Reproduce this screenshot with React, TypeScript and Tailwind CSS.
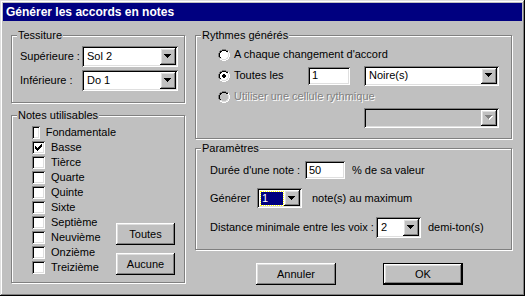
import type { ReactNode } from "react";

const raised =
  "shadow-[inset_-1px_-1px_#000,inset_1px_1px_#fff,inset_-2px_-2px_#808080,inset_2px_2px_#dfdfdf]";
const sunken =
  "shadow-[inset_1px_1px_#808080,inset_-1px_-1px_#fff,inset_2px_2px_#000,inset_-2px_-2px_#dfdfdf]";

function Arrow({ disabled = false }: { disabled?: boolean }) {
  const fill = disabled ? "#808080" : "#000";
  return (
    <svg width="8" height="5" viewBox="0 0 8 5" shapeRendering="crispEdges">
      {disabled && (
        <g fill="#fff">
          <rect x="1" y="1" width="7" height="1" />
          <rect x="2" y="2" width="5" height="1" />
          <rect x="3" y="3" width="3" height="1" />
          <rect x="4" y="4" width="1" height="1" />
        </g>
      )}
      <g fill={fill}>
        <rect x="0" y="0" width="7" height="1" />
        <rect x="1" y="1" width="5" height="1" />
        <rect x="2" y="2" width="3" height="1" />
        <rect x="3" y="3" width="1" height="1" />
      </g>
    </svg>
  );
}

function Combo({
  value,
  className,
  disabled = false,
  selected = false,
}: {
  value?: string;
  className: string;
  disabled?: boolean;
  selected?: boolean;
}) {
  return (
    <div
      className={`flex p-[2px] ${sunken} ${disabled ? "bg-[#c0c0c0]" : "bg-white"} ${className}`}
    >
      <div className="flex-1 flex items-center pl-[2px] pr-[1px] overflow-hidden">
        {selected ? (
          <div className="flex items-center h-[13px] w-full bg-[#000080] text-white pl-[1px] outline outline-1 outline-dotted outline-[#ffff00]">
            {value}
          </div>
        ) : (
          <span className="pl-[1px]">{value}</span>
        )}
      </div>
      <div className={`w-[16px] flex items-center justify-center bg-[#c0c0c0] ${raised}`}>
        <Arrow disabled={disabled} />
      </div>
    </div>
  );
}

function Group({
  label,
  className,
  children,
}: {
  label: string;
  className: string;
  children: ReactNode;
}) {
  return (
    <div
      className={`relative border border-[#808080] shadow-[1px_1px_0_#fff,inset_1px_1px_0_#fff] ${className}`}
    >
      <span className="absolute -top-[8px] left-[5px] px-[1px] bg-[#c0c0c0] leading-[14px]">
        {label}
      </span>
      {children}
    </div>
  );
}

function Check({ label, checked = false }: { label: string; checked?: boolean }) {
  return (
    <div className="flex items-center h-[15px] gap-[6px]">
      <div className={`w-[13px] h-[13px] bg-white flex items-center justify-center ${sunken}`}>
        {checked && (
          <svg width="7" height="7" viewBox="0 0 7 7" shapeRendering="crispEdges" fill="#000">
            <rect x="0" y="2" width="1" height="3" />
            <rect x="1" y="3" width="1" height="3" />
            <rect x="2" y="4" width="1" height="3" />
            <rect x="3" y="3" width="1" height="3" />
            <rect x="4" y="2" width="1" height="3" />
            <rect x="5" y="1" width="1" height="3" />
            <rect x="6" y="0" width="1" height="3" />
          </svg>
        )}
      </div>
      <span>{label}</span>
    </div>
  );
}

function Radio({ checked = false, disabled = false }: { checked?: boolean; disabled?: boolean }) {
  return (
    <svg width="12" height="12" viewBox="0 0 12 12" shapeRendering="crispEdges">
      <g fill="#808080">
        <rect x="4" y="0" width="4" height="1" />
        <rect x="2" y="1" width="2" height="1" />
        <rect x="8" y="1" width="2" height="1" />
        <rect x="1" y="2" width="1" height="2" />
        <rect x="0" y="4" width="1" height="4" />
        <rect x="1" y="8" width="1" height="1" />
      </g>
      <g fill="#fff">
        <rect x="10" y="2" width="1" height="2" />
        <rect x="11" y="4" width="1" height="4" />
        <rect x="10" y="8" width="1" height="2" />
        <rect x="8" y="10" width="2" height="1" />
        <rect x="4" y="11" width="4" height="1" />
        <rect x="2" y="10" width="2" height="1" />
      </g>
      <g fill="#000">
        <rect x="4" y="1" width="4" height="1" />
        <rect x="2" y="2" width="2" height="1" />
        <rect x="8" y="2" width="2" height="1" />
        <rect x="1" y="4" width="1" height="4" />
        <rect x="2" y="3" width="1" height="1" />
        <rect x="2" y="8" width="1" height="1" />
      </g>
      <g fill="#dfdfdf">
        <rect x="9" y="3" width="1" height="1" />
        <rect x="10" y="4" width="1" height="4" />
        <rect x="9" y="8" width="1" height="2" />
        <rect x="4" y="10" width="4" height="1" />
        <rect x="2" y="9" width="2" height="1" />
        <rect x="8" y="9" width="1" height="1" />
      </g>
      <g fill={disabled ? "#c0c0c0" : "#fff"}>
        <rect x="4" y="2" width="4" height="8" />
        <rect x="3" y="3" width="6" height="6" />
        <rect x="2" y="4" width="8" height="4" />
      </g>
      {checked && (
        <g fill="#000">
          <rect x="5" y="4" width="2" height="4" />
          <rect x="4" y="5" width="4" height="2" />
        </g>
      )}
    </svg>
  );
}

function Button({ label, isDefault = false }: { label: string; isDefault?: boolean }) {
  if (isDefault) {
    return (
      <div className="w-[80px] h-[22px] border border-black flex">
        <div className={`flex-1 flex items-center justify-center bg-[#c0c0c0] ${raised}`}>
          {label}
        </div>
      </div>
    );
  }
  return (
    <div className={`w-[80px] h-[22px] flex items-center justify-center bg-[#c0c0c0] ${raised}`}>
      {label}
    </div>
  );
}

const notes = [
  "Fondamentale",
  "Basse",
  "Tièrce",
  "Quarte",
  "Quinte",
  "Sixte",
  "Septième",
  "Neuvième",
  "Onzième",
  "Treizième",
];

export default function App() {
  return (
    <div
      className="w-[525px] h-[296px] bg-[#c0c0c0] p-[3px] text-[11px] leading-[13px] text-black shadow-[inset_-1px_-1px_#000,inset_1px_1px_#dfdfdf,inset_-2px_-2px_#808080,inset_2px_2px_#fff]"
      style={{ fontFamily: "'Liberation Sans', Arial, sans-serif" }}
    >
      {/* Title bar */}
      <div className="h-[18px] bg-[#000080] flex items-center pl-[3px]">
        <span className="text-white font-bold text-[12px]">Générer les accords en notes</span>
      </div>

      <div className="flex gap-[10px] pl-[8px] pt-[14px]">
        {/* Left column */}
        <div className="w-[174px] flex flex-col">
          <Group label="Tessiture" className="h-[68px]">
            <div className="flex flex-col gap-[3px] pt-[10px] pl-[8px]">
              <div className="flex items-center">
                <span className="w-[62px]">Supérieure :</span>
                <Combo value="Sol 2" className="w-[96px] h-[21px]" />
              </div>
              <div className="flex items-center">
                <span className="w-[62px]">Inférieure :</span>
                <Combo value="Do 1" className="w-[96px] h-[21px]" />
              </div>
            </div>
          </Group>

          <Group label="Notes utilisables" className="mt-[12px] h-[168px]">
            <div className="flex pt-[9px] pl-[20px]">
              <div className="w-[84px] flex flex-col">
                {notes.map((n) => (
                  <Check key={n} label={n} checked={n === "Basse"} />
                ))}
              </div>
              <div className="flex flex-col justify-end gap-[8px]">
                <div className={`w-[59px] h-[22px] flex items-center justify-center ${raised}`}>
                  Toutes
                </div>
                <div className={`w-[59px] h-[22px] flex items-center justify-center ${raised}`}>
                  Aucune
                </div>
              </div>
            </div>
          </Group>
        </div>

        {/* Right column */}
        <div className="w-[317px] flex flex-col">
          <Group label="Rythmes générés" className="h-[104px]">
            <div className="flex flex-col pt-[8px] pl-[22px]">
              <div className="flex items-center h-[21px] gap-[4px]">
                <Radio />
                <span>A chaque changement d'accord</span>
              </div>
              <div className="flex items-center h-[21px]">
                <Radio checked />
                <span className="ml-[4px] w-[74px]">Toutes les</span>
                <div className={`w-[42px] h-[18px] bg-white flex items-center pl-[4px] ${sunken}`}>
                  1
                </div>
                <Combo value="Noire(s)" className="ml-[14px] w-[135px] h-[20px]" />
              </div>
              <div className="flex items-center h-[21px] gap-[4px]">
                <Radio disabled />
                <span className="text-[#808080] [text-shadow:1px_1px_0_#fff]">
                  Utiliser une cellule rythmique
                </span>
              </div>
              <div className="flex items-center h-[21px]">
                <Combo disabled className="ml-[146px] w-[135px] h-[20px]" />
              </div>
            </div>
          </Group>

          <Group label="Paramètres" className="mt-[9px] h-[102px]">
            <div className="flex flex-col pt-[12px] pl-[14px] gap-[9px]">
              <div className="flex items-center h-[18px]">
                <span className="w-[95px]">Durée d'une note :</span>
                <div className={`w-[40px] h-[18px] bg-white flex items-center pl-[4px] ${sunken}`}>
                  50
                </div>
                <span className="ml-[7px]">% de sa valeur</span>
              </div>
              <div className="flex items-center h-[20px]">
                <span className="w-[47px]">Générer</span>
                <Combo value="1" selected className="w-[45px] h-[20px]" />
                <span className="ml-[10px]">note(s) au maximum</span>
              </div>
              <div className="flex items-center h-[21px]">
                <span className="w-[166px]">Distance minimale entre les voix :</span>
                <Combo value="2" className="w-[45px] h-[21px]" />
                <span className="ml-[7px]">demi-ton(s)</span>
              </div>
            </div>
          </Group>

          <div className="flex mt-[13px] pl-[61px] gap-[47px]">
            <Button label="Annuler" />
            <Button label="OK" isDefault />
          </div>
        </div>
      </div>
    </div>
  );
}
